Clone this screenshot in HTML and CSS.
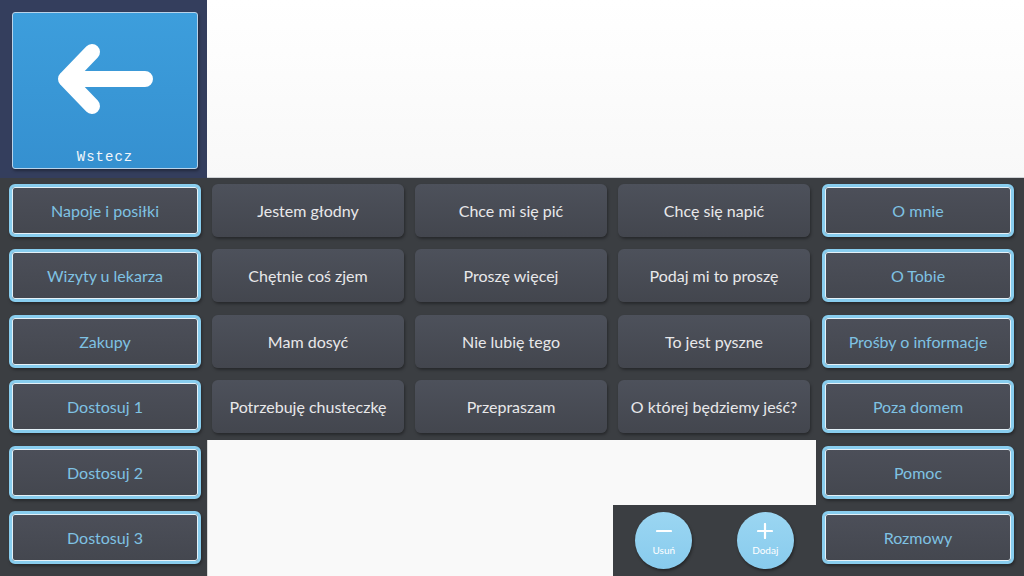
FILE: index.html
```html
<!DOCTYPE html>
<html lang="pl">
<head>
<meta charset="utf-8">
<title>Napoje i posiłki</title>
<link rel="stylesheet" href="styles.css">
</head>
<body>
<div class="app">
  <div class="top">
    <div class="nav-panel">
      <div class="back-btn">
        <svg class="back-icon" width="120" height="90" viewBox="0 0 120 90">
          <path d="M47 18 L21 45 L47 72 M21 45 L100 45" fill="none" stroke="#ffffff" stroke-width="16" stroke-linecap="round" stroke-linejoin="round"/>
        </svg>
        <span class="back-label">Wstecz</span>
      </div>
    </div>
    <div class="message"></div>
  </div>
  <div class="board">
    <div class="cell left"><div class="cat">Napoje i posiłki</div></div>
    <div class="cell mid"><div class="phrase">Jestem głodny</div></div>
    <div class="cell mid"><div class="phrase">Chce mi się pić</div></div>
    <div class="cell mid"><div class="phrase">Chcę się napić</div></div>
    <div class="cell right"><div class="cat">O mnie</div></div>

    <div class="cell left"><div class="cat">Wizyty u lekarza</div></div>
    <div class="cell mid"><div class="phrase">Chętnie coś zjem</div></div>
    <div class="cell mid"><div class="phrase">Proszę więcej</div></div>
    <div class="cell mid"><div class="phrase">Podaj mi to proszę</div></div>
    <div class="cell right"><div class="cat">O Tobie</div></div>

    <div class="cell left"><div class="cat">Zakupy</div></div>
    <div class="cell mid"><div class="phrase">Mam dosyć</div></div>
    <div class="cell mid"><div class="phrase">Nie lubię tego</div></div>
    <div class="cell mid"><div class="phrase">To jest pyszne</div></div>
    <div class="cell right"><div class="cat">Prośby o informacje</div></div>

    <div class="cell left"><div class="cat">Dostosuj 1</div></div>
    <div class="cell mid"><div class="phrase">Potrzebuję chusteczkę</div></div>
    <div class="cell mid"><div class="phrase">Przepraszam</div></div>
    <div class="cell mid"><div class="phrase">O której będziemy jeść?</div></div>
    <div class="cell right"><div class="cat">Poza domem</div></div>

    <div class="cell left"><div class="cat">Dostosuj 2</div></div>
    <div class="blank">
      <div class="tools">
        <div class="round-btn">
          <svg width="16" height="16" viewBox="0 0 16 16"><path d="M1 8 H15" stroke="#fff" stroke-width="2.2" stroke-linecap="round"/></svg>
          <span class="round-label">Usuń</span>
        </div>
        <div class="round-btn">
          <svg width="16" height="16" viewBox="0 0 16 16"><path d="M1 8 H15 M8 1 V15" stroke="#fff" stroke-width="2.2" stroke-linecap="round"/></svg>
          <span class="round-label">Dodaj</span>
        </div>
      </div>
    </div>
    <div class="cell right"><div class="cat">Pomoc</div></div>

    <div class="cell left"><div class="cat">Dostosuj 3</div></div>
    <div class="cell right"><div class="cat">Rozmowy</div></div>
  </div>
</div>
</body>
</html>
```
FILE: styles.css
```css
* { box-sizing: border-box; }
html, body { margin: 0; padding: 0; }
body {
  width: 1024px;
  height: 576px;
  overflow: hidden;
  font-family: "Lato", "Open Sans", sans-serif;
  background: #3b3e42;
}
.app {
  display: flex;
  flex-direction: column;
  width: 1024px;
  height: 576px;
}
.top {
  display: flex;
  height: 178px;
  flex: none;
}
.nav-panel {
  width: 207px;
  background: #343e5d;
  padding: 12px 9px 9px 12px;
}
.back-btn {
  width: 186px;
  height: 157px;
  border: 1px solid #b9d3ea;
  border-radius: 3px;
  background: linear-gradient(#3d9edc, #3590d0);
  box-shadow: 1px 2px 3px rgba(0,0,0,0.35);
  display: flex;
  flex-direction: column;
  align-items: center;
}
.back-icon {
  margin-top: 21px;
}
.back-label {
  margin-top: 25px;
  font-family: "Liberation Mono", "DejaVu Sans Mono", monospace;
  font-size: 14px;
  color: #f2f6fa;
  letter-spacing: 1px;
}
.message {
  flex: 1;
  background: linear-gradient(#ffffff, #f8f8f8);
  border-bottom: 1px solid #cfd2d6;
}
.board {
  flex: 1;
  display: grid;
  grid-template-columns: 207px 203px 203px 203px 208px;
  grid-template-rows: repeat(5, 65.5px) 1fr;
}
.cell {
  padding-top: 5.5px;
}
.left { padding-left: 9px; padding-right: 6px; grid-column: 1; }
.mid { padding-left: 5px; padding-right: 6px; }
.right { padding-left: 6px; padding-right: 10px; grid-column: 5; }
.phrase, .cat {
  height: 53px;
  display: flex;
  align-items: center;
  justify-content: center;
  font-size: 16px;
  white-space: nowrap;
}
.phrase {
  border-radius: 6px;
  background: linear-gradient(#4d515b, #43464e);
  box-shadow: 1px 2px 3px rgba(0,0,0,0.35);
  color: #e8e8ea;
}
.cat {
  border: 3px solid #88cdee;
  border-radius: 6px;
  background: linear-gradient(#4c4f59, #44474f);
  box-shadow: inset 0 0 0 1px #e4f1f8, 1px 2px 3px rgba(0,0,0,0.35);
  color: #7fc2e3;
}
.blank {
  grid-column: 2 / 5;
  grid-row: 5 / 7;
  background: #f9f9f9;
  border-left: 1px solid #d8d8d8;
  display: flex;
  flex-direction: column;
  justify-content: flex-end;
  align-items: flex-end;
}
.tools {
  width: 203px;
  height: 71px;
  background: #3b3e42;
  display: flex;
  justify-content: space-around;
  align-items: center;
  padding-bottom: 1px;
}
.round-btn {
  width: 57px;
  height: 57px;
  border-radius: 50%;
  background: linear-gradient(#9bd6f2, #88cbed);
  box-shadow: 1px 2px 3px rgba(0,0,0,0.4);
  display: flex;
  flex-direction: column;
  align-items: center;
  padding-top: 11px;
}
.round-label {
  margin-top: 5px;
  font-size: 10px;
  color: #ffffff;
}
```
